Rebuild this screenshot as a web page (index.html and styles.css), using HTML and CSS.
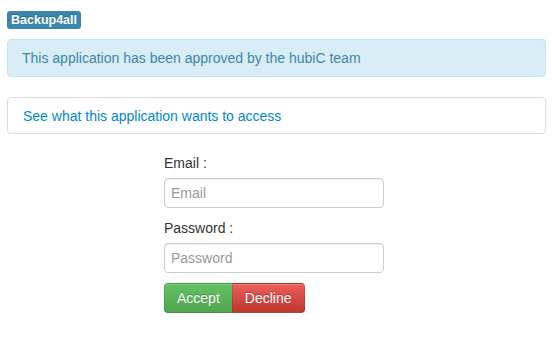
FILE: index.html
```html
<!DOCTYPE html>
<html>
<head>
<meta charset="utf-8">
<title>hubiC authorization</title>
<link rel="stylesheet" href="styles.css">
</head>
<body>
<div class="page">
  <div class="app-name"><span class="label">Backup4all</span></div>
  <div class="alert">This application has been approved by the hubiC team</div>
  <div class="panel"><a href="#" class="panel-link">See what this application wants to access</a></div>
  <form class="login">
    <label class="field-label" for="email">Email :</label>
    <input class="field" id="email" type="text" placeholder="Email">
    <label class="field-label" for="password">Password :</label>
    <input class="field" id="password" type="password" placeholder="Password">
    <div class="btn-group">
      <button type="button" class="btn btn-success">Accept</button>
      <button type="button" class="btn btn-danger">Decline</button>
    </div>
  </form>
</div>
</body>
</html>
```
FILE: styles.css
```css
* { box-sizing: border-box; }
html, body { margin: 0; padding: 0; background: #fff; }
body {
  font-family: "Liberation Sans", Arial, sans-serif;
  font-size: 14px;
  line-height: 20px;
  color: #333;
}
.page {
  padding: 11px 6px 0 7px;
}
.app-name {
  line-height: 18px;
  height: 18px;
  display: flex;
}
.label {
  display: inline-block;
  padding: 2px 4px;
  font-size: 12.5px;
  font-weight: bold;
  line-height: 14px;
  color: #fff;
  text-shadow: 0 -1px 0 rgba(0,0,0,0.25);
  background-color: #3a87ad;
  border-radius: 3px;
}
.alert {
  margin-top: 10px;
  padding: 8px 35px 8px 14px;
  background: #d9edf7;
  border: 1px solid #bce8f1;
  border-radius: 4px;
  color: #3a87ad;
}
.panel {
  margin-top: 20px;
  padding: 8px 15px 7px;
  border: 1px solid #ddd;
  border-radius: 4px;
  background: #fff;
}
.panel-link {
  color: #0088cc;
  text-decoration: none;
}
.login {
  margin: 19px 0 0 157px;
  width: 220px;
  display: flex;
  flex-direction: column;
}
.field-label {
  display: block;
  color: #333;
  margin-bottom: 5px;
}
.field {
  display: block;
  width: 220px;
  height: 30px;
  margin: 0 0 10px;
  padding: 0 6px;
  font-family: inherit;
  font-size: 14px;
  color: #555;
  border: 1px solid #ccc;
  border-radius: 4px;
  box-shadow: inset 0 1px 1px rgba(0,0,0,0.075);
  outline: none;
}
.field::placeholder { color: #999; }
.btn-group {
  display: flex;
}
.btn {
  height: 30px;
  padding: 0 12px;
  font-family: inherit;
  font-size: 14px;
  line-height: 20px;
  color: #fff;
  text-shadow: 0 -1px 0 rgba(0,0,0,0.25);
  border: 1px solid rgba(0,0,0,0.1);
  border-bottom-color: rgba(0,0,0,0.25);
  box-shadow: inset 0 1px 0 rgba(255,255,255,0.2), 0 1px 2px rgba(0,0,0,0.05);
  cursor: pointer;
}
.btn-success {
  background: linear-gradient(to bottom, #62c462, #51a351);
  border-radius: 4px 0 0 4px;
}
.btn-danger {
  background: linear-gradient(to bottom, #ee5f5b, #bd362f);
  border-radius: 0 4px 4px 0;
  margin-left: -1px;
}
```
